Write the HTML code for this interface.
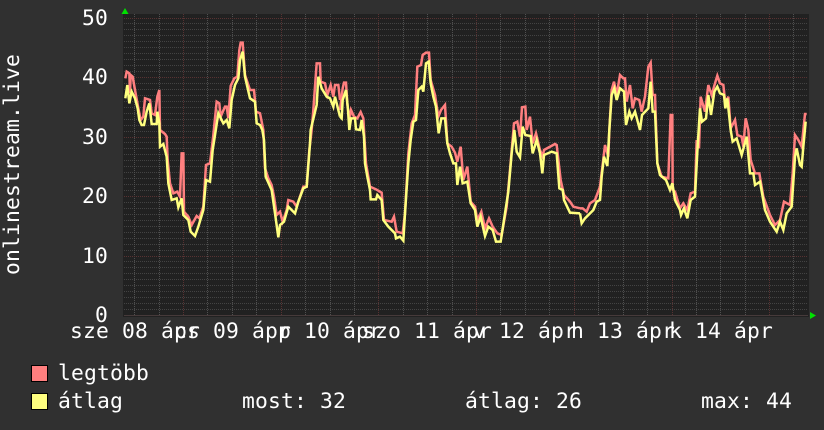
<!DOCTYPE html>
<html><head><meta charset="utf-8"><style>
html,body{margin:0;padding:0;background:#303030;width:824px;height:430px;overflow:hidden}
svg{display:block}
text{font-family:"DejaVu Sans Mono","Liberation Mono",monospace;font-size:21.33px;letter-spacing:.16px;fill:#fff}
</style></head><body>
<svg width="824" height="430" viewBox="0 0 824 430" xmlns="http://www.w3.org/2000/svg">
<rect width="824" height="430" fill="#303030"/>
<rect x="123" y="14" width="686" height="303" fill="#212121"/>
<g fill="none" stroke-width="1" shape-rendering="crispEdges">
<path stroke="#434343" stroke-dasharray="1 1" d="M124 309.5H808M124 303.5H808M124 297.5H808M124 291.5H808M124 285.5H808M124 279.5H808M124 273.5H808M124 267.5H808M124 261.5H808M124 250.5H808M124 244.5H808M124 238.5H808M124 232.5H808M124 226.5H808M124 220.5H808M124 214.5H808M124 208.5H808M124 202.5H808M124 190.5H808M124 184.5H808M124 178.5H808M124 172.5H808M124 166.5H808M124 160.5H808M124 154.5H808M124 148.5H808M124 142.5H808M124 131.5H808M124 125.5H808M124 119.5H808M124 113.5H808M124 107.5H808M124 101.5H808M124 95.5H808M124 89.5H808M124 83.5H808M124 71.5H808M124 65.5H808M124 59.5H808M124 53.5H808M124 47.5H808M124 41.5H808M124 35.5H808M124 29.5H808M124 23.5H808"/>
<path stroke="#505050" stroke-dasharray="1 1" d="M134.5 14V316M159.5 14V316M207.5 14V316M232.5 14V316M256.5 14V316M305.5 14V316M330.5 14V316M354.5 14V316M403.5 14V316M427.5 14V316M452.5 14V316M500.5 14V316M525.5 14V316M549.5 14V316M598.5 14V316M623.5 14V316M647.5 14V316M696.5 14V316M720.5 14V316M745.5 14V316M793.5 14V316"/>
<path stroke="#583232" stroke-dasharray="1 1" d="M124 18.5H808M124 77.5H808M124 137.5H808M124 196.5H808M124 256.5H808M183.5 14V316M281.5 14V316M378.5 14V316M476.5 14V316M574.5 14V316M672.5 14V316M769.5 14V316"/>
<path stroke="#463a3a" d="M124 315.5H808"/>
</g>
<g fill="none" stroke="#ff7f7f" stroke-width="7.5" stroke-linejoin="miter">
<polyline transform="translate(100,0) scale(.33333)" points="76,235 80,215 88,220 90,280 92,225 98,230 105,270 115,325 122,360 130,350 135,295 150,300 155,340 165,345 172,290 178,270 180,390 195,402 200,410 203,480 210,550 220,580 232,575 240,590 245,460 250,460 252,635 265,650 275,675 290,648 298,655 310,620 318,495 330,490 340,405 350,305 358,310 362,350 375,320 380,320 385,355 392,258 403,235 412,230 418,150 422,128 428,128 435,225 450,270 462,270 468,335 480,340 490,390 495,505 505,535 515,555 522,590 530,645 540,635 548,665 560,630 565,600 580,605 590,620 600,590 610,560 620,560 628,450 635,390 640,330 650,190 660,190 662,245 675,250 682,285 692,255 700,290 705,255 715,255 720,300"/>
<polyline transform="translate(340,20) scale(.33333)" points="0,270 8,205 12,188 18,188 22,250 28,300 33,270 42,290 52,295 62,276 70,295 73,350 78,430 90,500 108,508 125,518 132,600 155,605 162,590 170,635 188,640 195,580 205,400 215,310 225,285 232,140 243,135 248,105 258,98 267,98 272,180 285,225 295,290 303,270 315,255 322,370 335,380 345,398 352,425 362,380 370,480 382,440 392,545 405,560 412,600 424,575 435,625 447,595 458,620 472,640 485,645 500,560 510,450 522,310 532,305 540,350 546,262 556,260 560,330 570,290 578,370 588,340 600,390 608,410 612,390 645,372 650,375 662,480 672,525 690,545 700,560 720,565"/>
<polyline transform="translate(580,40) scale(.33333)" points="0,505 8,505 20,515 30,490 45,480 60,440 75,315 85,350 88,270 95,150 102,125 110,165 120,105 130,115 135,115 140,185 150,135 158,205 165,175 178,180 185,215 195,170 205,80 212,68 218,165 225,165 232,370 245,410 265,415 272,225 277,225 278,450 285,455 300,505 310,490 322,510 332,460 345,455 350,300 357,325 362,170 375,215 385,135 395,165 405,130 412,107 420,130 430,135 436,190 445,170 452,265 465,240 472,285 485,290 490,320 497,235 505,270 512,360 525,400 538,400 550,470 570,525 585,555 600,540 612,485 630,495 638,400 645,285 655,300 665,320 675,222 680,222"/>
</g>
<g fill="none" stroke="#ffff7f" stroke-width="7.5" stroke-linejoin="miter">
<polyline transform="translate(100,0) scale(.33333)" points="76,295 82,255 88,310 95,275 105,295 113,325 118,360 125,375 132,375 140,335 148,310 155,372 170,372 172,335 178,370 180,440 190,432 200,470 205,550 215,600 230,595 235,622 245,595 250,645 265,660 272,695 285,708 295,680 310,630 318,540 330,545 338,450 345,405 355,340 370,370 380,360 388,385 395,300 405,255 415,235 420,180 428,155 435,230 450,295 465,305 470,370 480,375 487,390 492,420 497,530 515,570 525,640 535,712 540,675 552,665 565,620 585,640 595,605 610,565 620,560 630,430 632,390 650,315 655,230 665,265 680,290 690,295 700,320 705,290 720,350"/>
<polyline transform="translate(340,20) scale(.33333)" points="0,290 5,295 8,240 18,210 24,270 28,330 33,295 45,295 48,328 60,330 65,300 72,350 75,430 82,470 90,510 92,538 108,538 112,525 125,540 130,600 145,620 165,640 168,655 180,650 190,662 195,580 205,430 212,360 220,305 228,300 235,210 245,200 250,215 258,130 266,125 272,190 280,230 288,260 296,340 304,295 315,295 322,370 330,400 340,430 348,430 352,495 360,440 368,490 382,485 392,550 405,570 412,620 422,590 435,648 445,620 458,630 468,665 482,665 495,580 505,515 515,400 523,330 530,395 540,412 548,320 556,345 572,348 578,400 590,360 600,400 607,460 612,405 635,395 650,400 658,505 668,510 672,540 690,578 720,580"/>
<polyline transform="translate(580,40) scale(.33333)" points="0,520 5,550 15,535 30,520 40,510 50,485 60,480 65,410 72,350 82,378 88,270 95,165 103,145 110,180 120,145 132,155 138,255 148,215 155,235 165,215 180,270 186,225 205,205 212,125 218,215 225,215 232,370 240,405 258,420 270,450 277,430 285,480 300,510 303,525 312,505 322,535 332,480 345,470 352,335 360,205 366,245 378,235 385,165 393,225 403,155 412,140 420,160 432,165 436,205 442,175 452,270 458,305 470,295 485,345 500,290 510,400 520,400 525,435 540,425 555,510 570,545 590,575 600,545 610,570 620,520 635,500 645,350 650,325 660,375 665,380 670,320 677,245"/>
</g>
<polygon points="125,8 128.5,14 121.5,14" fill="#00e000"/>
<polygon points="810,312 816,315.5 810,319" fill="#00e000"/>
<text x="82" y="25">50</text>
<text x="82" y="84">40</text>
<text x="82" y="144">30</text>
<text x="82" y="203">20</text>
<text x="82" y="263">10</text>
<text x="95" y="322">0</text>
<text x="70" y="338">sze 08 ápr</text>
<text x="174" y="338">cs 09 ápr</text>
<text x="278" y="338">p 10 ápr</text>
<text x="362" y="338">szo 11 ápr</text>
<text x="473" y="338">v 12 ápr</text>
<text x="571" y="338">h 13 ápr</text>
<text x="669" y="338">k 14 ápr</text>
<text transform="translate(19,275) rotate(-90)" x="0" y="0">onlinestream.live</text>
<rect x="31.5" y="365.5" width="16" height="16" fill="#ff7f7f" stroke="#000"/>
<rect x="31.5" y="393.5" width="16" height="16" fill="#ffff7f" stroke="#000"/>
<text x="58" y="380">legtöbb</text>
<text x="58" y="408">átlag</text>
<text x="242" y="408">most: 32</text>
<text x="465" y="408">átlag: 26</text>
<text x="701" y="408">max: 44</text>
</svg>
</body></html>
